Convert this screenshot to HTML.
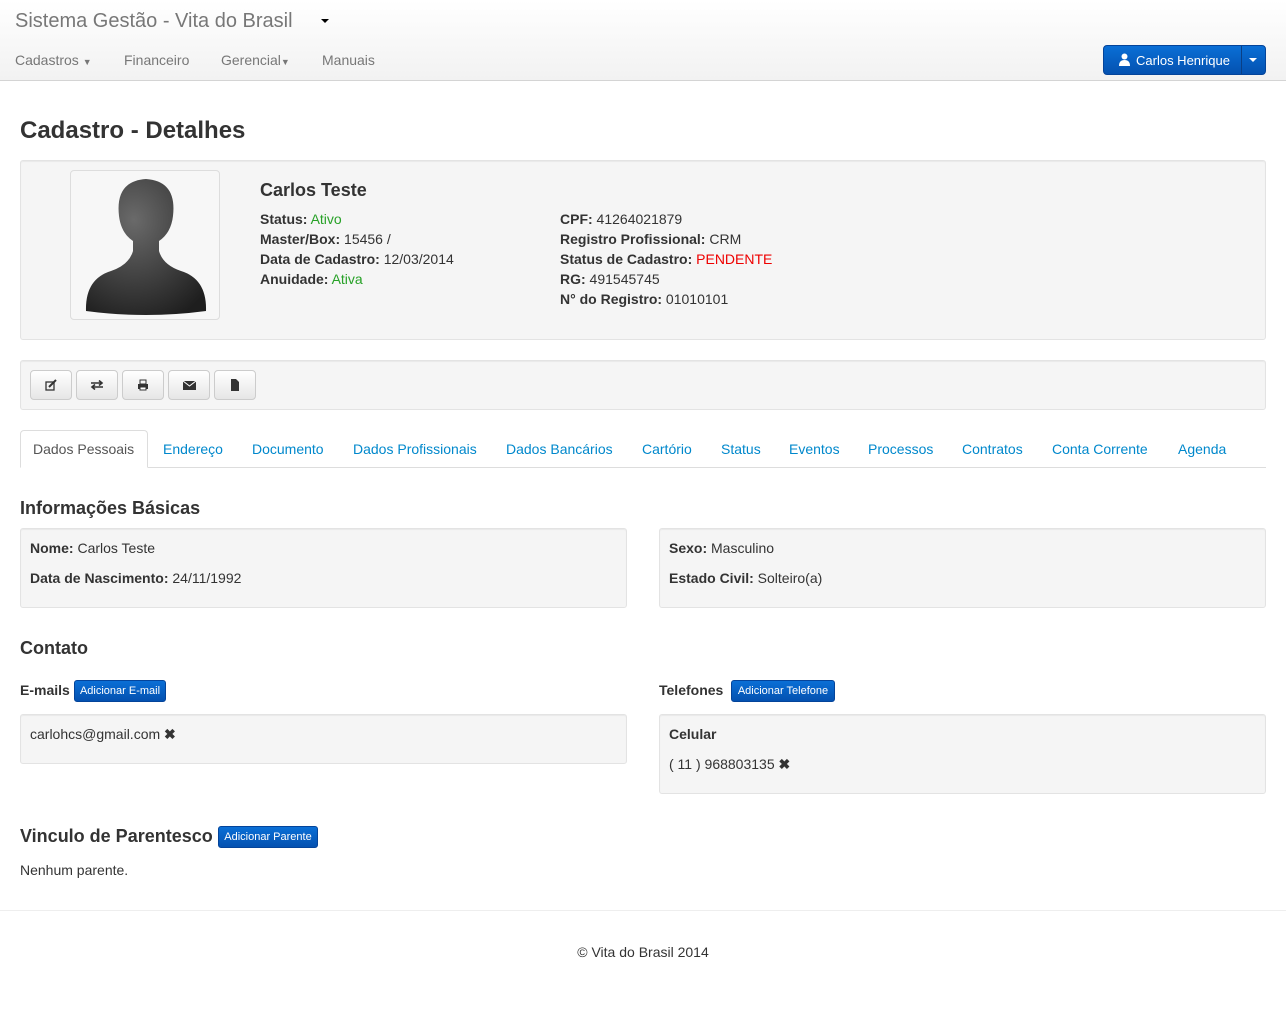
<!DOCTYPE html>
<html><head><meta charset="utf-8"><style>
*{box-sizing:border-box;margin:0;padding:0}
body{width:1286px;height:1012px;position:relative;font-family:"Liberation Sans",Arial,sans-serif;font-size:14px;color:#333;background:#fff;overflow:hidden}
.a{position:absolute;white-space:nowrap}
.nav{position:absolute;left:0;top:0;width:1286px;height:81px;background:linear-gradient(#fff,#f2f2f2);border-bottom:1px solid #d4d4d4}
.nl{color:#777;font-size:14px}
.well{position:absolute;background:#f5f5f5;border:1px solid #e3e3e3;border-radius:3px;box-shadow:inset 0 1px 1px rgba(0,0,0,.05)}
.tb{position:absolute;top:370px;width:42px;height:30px;border:1px solid #ccc;border-radius:4px;background:linear-gradient(#fff,#e6e6e6);display:flex;align-items:center;justify-content:center}
.tab{position:absolute;top:441px;color:#0088cc;font-size:14px}
.bb{position:absolute;background:linear-gradient(#0a6fd6,#0451b0);border:1px solid #04449a;border-radius:3px;color:#fff;font-size:11px;display:flex;align-items:center;justify-content:center}
h3{position:absolute;font-size:18px;font-weight:bold;white-space:nowrap}
.g{color:#27a127}.r{color:#e00}
</style></head><body>
<div class="nav"></div>
<div class="a" style="left:15px;top:10px;font-size:20px;color:#777">Sistema Gestão - Vita do Brasil</div>
<div class="a" style="left:321px;top:19px;border-left:4px solid transparent;border-right:4px solid transparent;border-top:4px solid #000"></div>
<div class="a nl" style="left:15px;top:52px">Cadastros <span style="font-size:9px">▼</span></div>
<div class="a nl" style="left:124px;top:52px">Financeiro</div>
<div class="a nl" style="left:221px;top:52px">Gerencial<span style="font-size:9px">▼</span></div>
<div class="a nl" style="left:322px;top:52px">Manuais</div>
<div class="a" style="left:1103px;top:45px;width:163px;height:30px;border-radius:4px;background:linear-gradient(#0a6fd6,#0451b0);border:1px solid #04449a"></div>
<div class="a" style="left:1241px;top:46px;width:1px;height:28px;background:#0a3f85"></div>
<svg class="a" style="left:1119px;top:53px" width="11" height="13" viewBox="0 0 11 13"><circle cx="5.5" cy="3.5" r="3" fill="#fff"/><path d="M0 13 Q0 7 5.5 7 Q11 7 11 13Z" fill="#fff"/></svg>
<div class="a" style="left:1136px;top:53px;color:#fff;font-size:13px">Carlos Henrique</div>
<div class="a" style="left:1249px;top:58px;border-left:4px solid transparent;border-right:4px solid transparent;border-top:4px solid #fff"></div>

<div class="a" style="left:20px;top:117px;font-size:24px;font-weight:bold">Cadastro - Detalhes</div>
<div class="well" style="left:20px;top:160px;width:1246px;height:180px"></div>
<div class="a" style="left:70px;top:170px;width:150px;height:150px;border:1px solid #ddd;border-radius:4px;background:#f7f7f7;overflow:hidden">
<svg width="150" height="150" viewBox="0 0 150 150"><defs><radialGradient id="h" cx=".4" cy=".3" r=".8"><stop offset="0" stop-color="#6a6a6a"/><stop offset="1" stop-color="#1e1e1e"/></radialGradient></defs>
<path d="M15 140 Q14 108 40 100 Q58 94 62 80 L62 70 Q50 62 48 45 Q44 10 75 8 Q106 10 102 45 Q100 62 88 70 L88 80 Q92 94 110 100 Q136 108 135 140 Q75 148 15 140Z" fill="url(#h)"/></svg></div>
<div class="a" style="left:260px;top:180px;font-size:18px;font-weight:bold">Carlos Teste</div>
<div class="a" style="left:260px;top:209px;line-height:20px"><b>Status:</b> <span class="g">Ativo</span><br><b>Master/Box:</b> 15456 /<br><b>Data de Cadastro:</b> 12/03/2014<br><b>Anuidade:</b> <span class="g">Ativa</span></div>
<div class="a" style="left:560px;top:209px;line-height:20px"><b>CPF:</b> 41264021879<br><b>Registro Profissional:</b> CRM<br><b>Status de Cadastro:</b> <span class="r">PENDENTE</span><br><b>RG:</b> 491545745<br><b>N° do Registro:</b> 01010101</div>

<div class="well" style="left:20px;top:360px;width:1246px;height:50px"></div>
<div class="tb" style="left:30px"><svg width="12" height="12"><rect x="1" y="3" width="8" height="8" fill="none" stroke="#333" stroke-width="1.3"/><path d="M4 8 L11 1" stroke="#333" stroke-width="2"/></svg></div>
<div class="tb" style="left:76px"><svg width="14" height="10"><path d="M1 3H12M9 0.5L12 3L9 5.5M13 7H2M5 4.5L2 7L5 9.5" stroke="#333" stroke-width="1.6" fill="none"/></svg></div>
<div class="tb" style="left:122px"><svg width="12" height="12"><rect x="3" y="1" width="6" height="4" fill="none" stroke="#333"/><rect x="1" y="5" width="10" height="5" fill="#333"/><rect x="3" y="8" width="6" height="3" fill="#fff" stroke="#333"/></svg></div>
<div class="tb" style="left:168px"><svg width="13" height="10"><rect x="0" y="1" width="13" height="9" fill="#333"/><path d="M0 1L6.5 6L13 1" stroke="#fff" fill="none"/></svg></div>
<div class="tb" style="left:214px"><svg width="10" height="12"><path d="M1 0H6L9 3V12H1Z" fill="#333"/></svg></div>

<div class="a" style="left:20px;top:467px;width:1246px;height:1px;background:#ddd"></div>
<div class="a" style="left:20px;top:430px;width:128px;height:38px;background:#fff;border:1px solid #ddd;border-bottom-color:#fff;border-radius:4px 4px 0 0"></div>
<div class="tab" style="left:33px;color:#555">Dados Pessoais</div>
<div class="tab" style="left:163px">Endereço</div>
<div class="tab" style="left:252px">Documento</div>
<div class="tab" style="left:353px">Dados Profissionais</div>
<div class="tab" style="left:506px">Dados Bancários</div>
<div class="tab" style="left:642px">Cartório</div>
<div class="tab" style="left:721px">Status</div>
<div class="tab" style="left:789px">Eventos</div>
<div class="tab" style="left:868px">Processos</div>
<div class="tab" style="left:962px">Contratos</div>
<div class="tab" style="left:1052px">Conta Corrente</div>
<div class="tab" style="left:1178px">Agenda</div>

<h3 style="left:20px;top:498px">Informações Básicas</h3>
<div class="well" style="left:20px;top:528px;width:607px;height:80px"></div>
<div class="well" style="left:659px;top:528px;width:607px;height:80px"></div>
<div class="a" style="left:30px;top:533px;line-height:30px"><b>Nome:</b> Carlos Teste<br><b>Data de Nascimento:</b> 24/11/1992</div>
<div class="a" style="left:669px;top:533px;line-height:30px"><b>Sexo:</b> Masculino<br><b>Estado Civil:</b> Solteiro(a)</div>

<h3 style="left:20px;top:638px">Contato</h3>
<div class="a" style="left:20px;top:682px;font-weight:bold">E-mails</div>
<div class="bb" style="left:74px;top:680px;width:92px;height:22px">Adicionar E-mail</div>
<div class="a" style="left:659px;top:682px;font-weight:bold">Telefones</div>
<div class="bb" style="left:731px;top:680px;width:104px;height:22px">Adicionar Telefone</div>
<div class="well" style="left:20px;top:714px;width:607px;height:50px"></div>
<div class="a" style="left:30px;top:726px">carlohcs@gmail.com <b>✖</b></div>
<div class="well" style="left:659px;top:714px;width:607px;height:80px"></div>
<div class="a" style="left:669px;top:719px;line-height:30px"><b>Celular</b><br>( 11 ) 968803135 <b>✖</b></div>

<h3 style="left:20px;top:826px">Vinculo de Parentesco</h3>
<div class="bb" style="left:218px;top:826px;width:100px;height:22px">Adicionar Parente</div>
<div class="a" style="left:20px;top:862px">Nenhum parente.</div>
<div class="a" style="left:0;top:910px;width:1286px;height:1px;background:#eee"></div>
<div class="a" style="left:0;top:944px;width:1286px;text-align:center">© Vita do Brasil 2014</div>
</body></html>
